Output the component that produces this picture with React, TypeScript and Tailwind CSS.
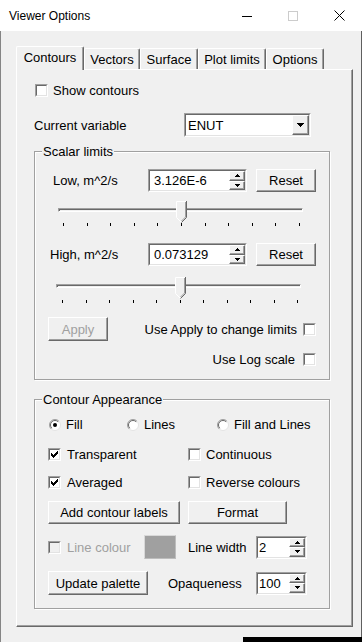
import React from "react";

type P = { className?: string; children?: React.ReactNode };

function Raised({ className = "", children }: P) {
  return (
    <div
      className={`border border-t-white border-l-white border-r-[#696969] border-b-[#696969] bg-[#f0f0f0] shadow-[inset_-1px_-1px_0_#a0a0a0] flex items-center justify-center ${className}`}
    >
      {children}
    </div>
  );
}

function Sunken({ className = "", children }: P) {
  return (
    <div
      className={`border border-t-[#a0a0a0] border-l-[#a0a0a0] border-r-white border-b-white ${className}`}
    >
      <div className="w-full h-full border border-t-[#696969] border-l-[#696969] border-r-[#e3e3e3] border-b-[#e3e3e3] flex bg-white">
        {children}
      </div>
    </div>
  );
}

function Check({ checked = false, disabled = false }: { checked?: boolean; disabled?: boolean }) {
  return (
    <div className="w-[13px] h-[13px] shrink-0 border border-t-[#a0a0a0] border-l-[#a0a0a0] border-r-white border-b-white">
      <div
        className={`w-full h-full border border-t-[#696969] border-l-[#696969] border-r-[#e3e3e3] border-b-[#e3e3e3] flex items-center justify-center ${
          disabled ? "bg-[#f0f0f0]" : "bg-white"
        }`}
      >
        {checked && (
          <svg width="7" height="7" viewBox="0 0 7 7" shapeRendering="crispEdges">
            <path d="M0 2h1v1h1v1h1v-1h1v-1h1v-1h1v-1h1v3h-1v1h-1v1h-1v1h-1v1h-1v-1h-1v-1h-1v-1h-1z" fill="black" />
          </svg>
        )}
      </div>
    </div>
  );
}

function Radio({ selected = false }: { selected?: boolean }) {
  return (
    <svg width="12" height="12" viewBox="0 0 12 12" className="shrink-0">
      <circle cx="6" cy="6" r="5.5" fill="white" stroke="#e3e3e3" />
      <path d="M2.1 9.9 A5.5 5.5 0 0 1 9.9 2.1" fill="none" stroke="#a0a0a0" />
      <path d="M2.8 9.2 A4.5 4.5 0 0 1 9.2 2.8" fill="none" stroke="#696969" />
      {selected && <circle cx="6" cy="6" r="2" fill="black" />}
    </svg>
  );
}

function UpArrow() {
  return (
    <svg width="5" height="3" viewBox="0 0 5 3" shapeRendering="crispEdges">
      <path d="M2 0h1v1h1v1h1v1H0V2h1V1h1z" fill="black" />
    </svg>
  );
}

function DownArrow() {
  return (
    <svg width="5" height="3" viewBox="0 0 5 3" shapeRendering="crispEdges">
      <path d="M0 0h5v1h-1v1h-1v1h-1v-1h-1v-1h-1z" fill="black" />
    </svg>
  );
}

function SpinEdit({ value, className, pad }: { value: string; className: string; pad: string }) {
  return (
    <Sunken className={className}>
      <div className={`flex-1 flex items-center ${pad} bg-white`}>{value}</div>
      <div className="w-[16px] flex flex-col">
        <Raised className="flex-1">
          <UpArrow />
        </Raised>
        <Raised className="flex-1">
          <DownArrow />
        </Raised>
      </div>
    </Sunken>
  );
}

function Button({ className = "", children, disabled = false }: P & { disabled?: boolean }) {
  return (
    <Raised className={`${className} ${disabled ? "text-[#a0a0a0]" : "text-black"}`}>
      <span>{children}</span>
    </Raised>
  );
}

function Slider({ thumb, tickPad, tickMt }: { thumb: string; tickPad: string; tickMt: string }) {
  const ticks = Array.from({ length: 11 });
  return (
    <div className="relative w-[245px] h-[27px] flex flex-col">
      <div className="mt-[8px] h-[4px] w-full border border-t-[#a0a0a0] border-l-[#a0a0a0] border-r-white border-b-white shadow-[inset_1px_1px_0_#696969]" />
      <div className={`flex justify-between pr-[3px] ${tickPad} ${tickMt}`}>
        {ticks.map((_, i) => (
          <div key={i} className="w-px h-[3px] bg-black" />
        ))}
      </div>
      <svg width="11" height="22" viewBox="0 0 11 22" className={`absolute top-[1px] ${thumb}`}>
        <path d="M0 0H11V16.5L5.5 22L0 16.5Z" fill="#f0f0f0" />
        <path d="M0.5 16.5V0.5H10" stroke="white" fill="none" />
        <path d="M0.5 16.5L5.5 21.5" stroke="white" fill="none" />
        <path d="M10.5 0V16.5L5.5 21.5" stroke="#696969" fill="none" />
        <path d="M9.5 1V16L5.5 20" stroke="#a0a0a0" fill="none" />
      </svg>
    </div>
  );
}

function Group({ label, className = "", children }: P & { label: string }) {
  return (
    <div
      className={`relative -ml-px w-[296px] border border-[#a0a0a0] shadow-[inset_1px_1px_0_white,1px_1px_0_white] flex flex-col ${className}`}
    >
      <div className="absolute -top-[8px] left-[7px] px-[1px] bg-[#f0f0f0] leading-[15px]">{label}</div>
      {children}
    </div>
  );
}

function Tab({ label, w, selected = false }: { label: string; w: string; selected?: boolean }) {
  if (selected) {
    return (
      <div
        className={`relative z-10 ${w} h-[24px] -mb-px bg-[#f0f0f0] border-t border-l border-r border-t-white border-l-white border-r-[#696969] rounded-tl-[2px] rounded-tr-[2px] shadow-[inset_-1px_0_0_#a0a0a0] flex items-center justify-center pb-[3px]`}
      >
        {label}
      </div>
    );
  }
  return (
    <div
      className={`${w} h-[21px] bg-[#f0f0f0] border-t border-l border-r border-t-white border-l-white border-r-[#696969] rounded-tl-[2px] rounded-tr-[2px] shadow-[inset_-1px_0_0_#a0a0a0] flex items-center justify-center pt-[1px]`}
    >
      {label}
    </div>
  );
}

export default function App() {
  return (
    <div className="w-[362px] h-[642px] flex flex-col font-['Liberation_Sans',Arial,sans-serif] text-black bg-[#f0f0f0] overflow-hidden">
      {/* Title bar */}
      <div className="h-[31px] bg-white flex items-center shrink-0">
        <div className="flex-1 pl-[9px] text-[12px] leading-[14px]">Viewer Options</div>
        <div className="w-[46px] h-full flex items-center justify-center">
          <svg width="10" height="10" viewBox="0 0 10 10" shapeRendering="crispEdges">
            <path d="M0 5.5H10" stroke="black" />
          </svg>
        </div>
        <div className="w-[46px] h-full flex items-center justify-center">
          <svg width="10" height="10" viewBox="0 0 10 10" shapeRendering="crispEdges">
            <rect x="0.5" y="0.5" width="9" height="9" fill="none" stroke="#cccccc" />
          </svg>
        </div>
        <div className="w-[46px] h-full flex items-center justify-center">
          <svg width="11" height="11" viewBox="0 0 11 11">
            <path d="M0.5 0.5L10.5 10.5M10.5 0.5L0.5 10.5" stroke="black" strokeWidth="1" />
          </svg>
        </div>
      </div>

      {/* Body */}
      <div className="h-[606px] shrink-0 border-l border-r border-l-[#858585] border-r-[#5f5f5f] flex flex-col pt-[15px] text-[13px] leading-[15px]">
        <div className="flex items-end h-[23px] ml-[15px]">
          <Tab label="Contours" w="w-[68px]" selected />
          <Tab label="Vectors" w="w-[56px]" />
          <Tab label="Surface" w="w-[58px]" />
          <Tab label="Plot limits" w="w-[68px]" />
          <Tab label="Options" w="w-[58px]" />
        </div>

        <div className="ml-[15px] w-[337px] h-[558px] border border-t-white border-l-white border-r-[#696969] border-b-[#696969] shadow-[inset_-1px_-1px_0_#a0a0a0] flex flex-col pl-[18px]">
          <div className="mt-[14px] h-[13px] flex items-center gap-[5px]">
            <Check />
            <span>Show contours</span>
          </div>

          <div className="mt-[16px] h-[24px] flex items-center -ml-px">
            <span className="w-[150px]">Current variable</span>
            <Sunken className="w-[127px] h-[24px]">
              <div className="flex-1 flex items-center pl-[2px] bg-white">ENUT</div>
              <Raised className="w-[17px] h-full">
                <svg width="7" height="4" viewBox="0 0 7 4" shapeRendering="crispEdges">
                  <path d="M0 0h7v1h-1v1h-1v1h-1v1h-1v-1h-1v-1h-1v-1h-1z" fill="black" />
                </svg>
              </Raised>
            </Sunken>
          </div>

          <Group label="Scalar limits" className="mt-[14px] h-[229px]">
            <div className="mt-[17px] h-[23px] flex items-center">
              <span className="pl-[18px] w-[113px]">Low, m^2/s</span>
              <SpinEdit value="3.126E-6" className="w-[99px] h-[23px]" pad="pl-[4px]" />
              <Button className="ml-[9px] w-[60px] h-[23px]">Reset</Button>
            </div>
            <div className="mt-[8px] ml-[23px]">
              <Slider thumb="left-[118px]" tickPad="pl-[5px]" tickMt="mt-[11px]" />
            </div>
            <div className="mt-[16px] h-[23px] flex items-center">
              <span className="pl-[15px] w-[113px]">High, m^2/s</span>
              <SpinEdit value="0.073129" className="w-[99px] h-[23px]" pad="pl-[4px]" />
              <Button className="ml-[9px] w-[60px] h-[23px]">Reset</Button>
            </div>
            <div className="mt-[10px] ml-[21px]">
              <Slider thumb="left-[119px]" tickPad="pl-[6px]" tickMt="mt-[12px]" />
            </div>
            <div className="mt-[14px] h-[24px] flex items-center justify-between pl-[13px] pr-[13px]">
              <Button disabled className="w-[60px] h-[24px]">
                Apply
              </Button>
              <div className="flex items-center gap-[6px]">
                <span>Use Apply to change limits</span>
                <Check />
              </div>
            </div>
            <div className="mt-[12px] h-[13px] flex items-center justify-end gap-[8px] pr-[13px]">
              <span>Use Log scale</span>
              <Check />
            </div>
          </Group>

          <Group label="Contour Appearance" className="mt-[19px] h-[210px]">
            <div className="mt-[18px] h-[13px] flex items-center ml-[14px]">
              <div className="w-[78px] flex items-center gap-[5px]">
                <Radio selected />
                <span>Fill</span>
              </div>
              <div className="w-[90px] flex items-center gap-[5px]">
                <Radio />
                <span>Lines</span>
              </div>
              <div className="flex items-center gap-[5px]">
                <Radio />
                <span>Fill and Lines</span>
              </div>
            </div>
            <div className="mt-[17px] h-[13px] flex items-center ml-[13px]">
              <div className="w-[140px] flex items-center gap-[6px]">
                <Check checked />
                <span>Transparent</span>
              </div>
              <div className="flex items-center gap-[5px]">
                <Check />
                <span>Continuous</span>
              </div>
            </div>
            <div className="mt-[15px] h-[13px] flex items-center ml-[13px]">
              <div className="w-[140px] flex items-center gap-[6px]">
                <Check checked />
                <span>Averaged</span>
              </div>
              <div className="flex items-center gap-[5px]">
                <Check />
                <span>Reverse colours</span>
              </div>
            </div>
            <div className="mt-[12px] h-[23px] flex items-center ml-[13px] gap-[8px]">
              <Button className="w-[132px] h-[23px]">Add contour labels</Button>
              <Button className="w-[99px] h-[23px]">Format</Button>
            </div>
            <div className="mt-[11px] h-[24px] flex items-center ml-[13px]">
              <div className="w-[96px] flex items-center gap-[6px] text-[#a0a0a0]">
                <Check disabled />
                <span>Line colour</span>
              </div>
              <div className="w-[32px] h-[24px] bg-[#a0a0a0] border border-t-[#d8d8d8] border-l-[#d8d8d8] border-r-[#bdbdbd] border-b-[#bdbdbd]" />
              <span className="ml-[12px] w-[68px]">Line width</span>
              <SpinEdit value="2" className="w-[51px] h-[23px]" pad="pl-[1px]" />
            </div>
            <div className="mt-[12px] h-[24px] flex items-center ml-[13px]">
              <Button className="w-[100px] h-[24px]">Update palette</Button>
              <span className="ml-[20px] w-[88px]">Opaqueness</span>
              <SpinEdit value="100" className="w-[51px] h-[23px]" pad="pl-[1px]" />
            </div>
          </Group>
        </div>
      </div>

      {/* Bottom strip */}
      <div className="h-[5px] flex shrink-0">
        <div className="flex-1 border-l border-l-[#858585] bg-[#f0f0f0]" />
        <div className="w-[119px] bg-black" />
      </div>
    </div>
  );
}
